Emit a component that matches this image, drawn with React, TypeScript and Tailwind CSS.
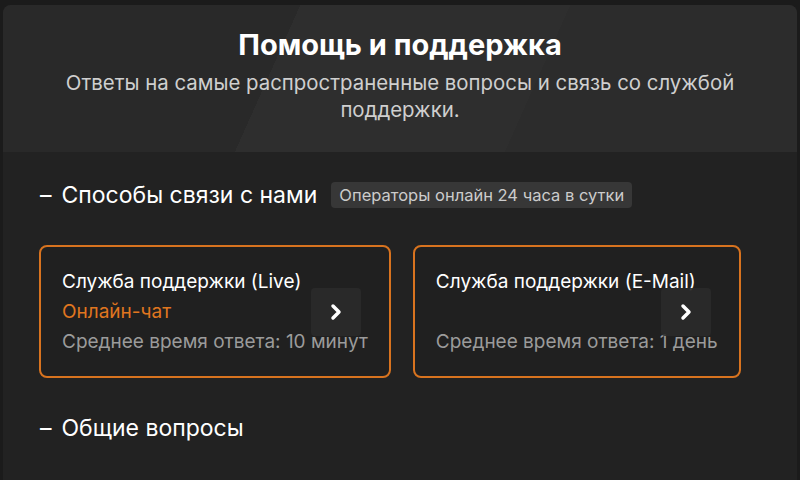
import { ChevronRight } from "lucide-react";

type SupportChannel = {
  title: string;
  subtitle?: string;
  answerTime: string;
};

const channels: SupportChannel[] = [
  {
    title: "Служба поддержки (Live)",
    subtitle: "Онлайн-чат",
    answerTime: "Среднее время ответа: 10 минут",
  },
  {
    title: "Служба поддержки (E-Mail)",
    answerTime: "Среднее время ответа: 1 день",
  },
];

const SectionTitle = ({ children }: { children: React.ReactNode }) => (
  <div className="ml-px flex items-center gap-[10px] text-[23px] leading-8 text-white">
    <span>–</span>
    <span>{children}</span>
  </div>
);

const ChannelCard = ({ channel }: { channel: SupportChannel }) => (
  <div className="relative cursor-pointer rounded-lg border-2 border-[#d8731f] bg-[#202020] px-[21px] pb-[19px] pt-[20px] text-[19px] leading-[30px]">
    <div className="text-white">{channel.title}</div>
    <div className="h-[30px] text-[#e0761f]">{channel.subtitle}</div>
    <div className="text-[#9b9b9b]">{channel.answerTime}</div>
    <div className="absolute right-[28px] top-1/2 flex h-12 w-[50px] -translate-y-1/2 items-center justify-center rounded-sm bg-[#2a2a2a]/90">
      <ChevronRight className="size-6 text-white" strokeWidth={3.5} />
    </div>
  </div>
);

export default function App() {
  return (
    <div className="h-[480px] w-[800px] overflow-hidden bg-[#1b1b1b] px-[3px] pt-[5px] font-['Inter','Noto_Sans',sans-serif]">
      <div className="flex h-full flex-col rounded-t-lg bg-[#222222]">
        <div className="flex h-[147px] flex-col items-center rounded-t-lg bg-[linear-gradient(114deg,#292929_34.6%,#2e2e2e_34.6%,#2e2e2e_66%,#2c2c2c_66%)] pt-[22px] text-center">
          <h1 className="text-[29px] font-bold leading-9 text-white">
            Помощь и поддержка
          </h1>
          <p className="mt-[6px] max-w-[700px] text-[20.4px] leading-[27px] text-[#cfcfcf]">
            Ответы на самые распространенные вопросы и связь со службой
            поддержки.
          </p>
        </div>

        <div className="flex flex-col px-[36px] pt-[27px]">
          <div className="flex items-center gap-[14px]">
            <SectionTitle>Способы связи с нами</SectionTitle>
            <span className="rounded bg-[#373737] px-2 py-[3px] text-[16.5px] leading-5 text-[#cccccc]">
              Операторы онлайн 24 часа в сутки
            </span>
          </div>

          <div className="mt-[34px] flex items-start gap-[22px]">
            {channels.map((channel) => (
              <ChannelCard key={channel.title} channel={channel} />
            ))}
          </div>

          <div className="mt-[34px]">
            <SectionTitle>Общие вопросы</SectionTitle>
          </div>
        </div>
      </div>
    </div>
  );
}
